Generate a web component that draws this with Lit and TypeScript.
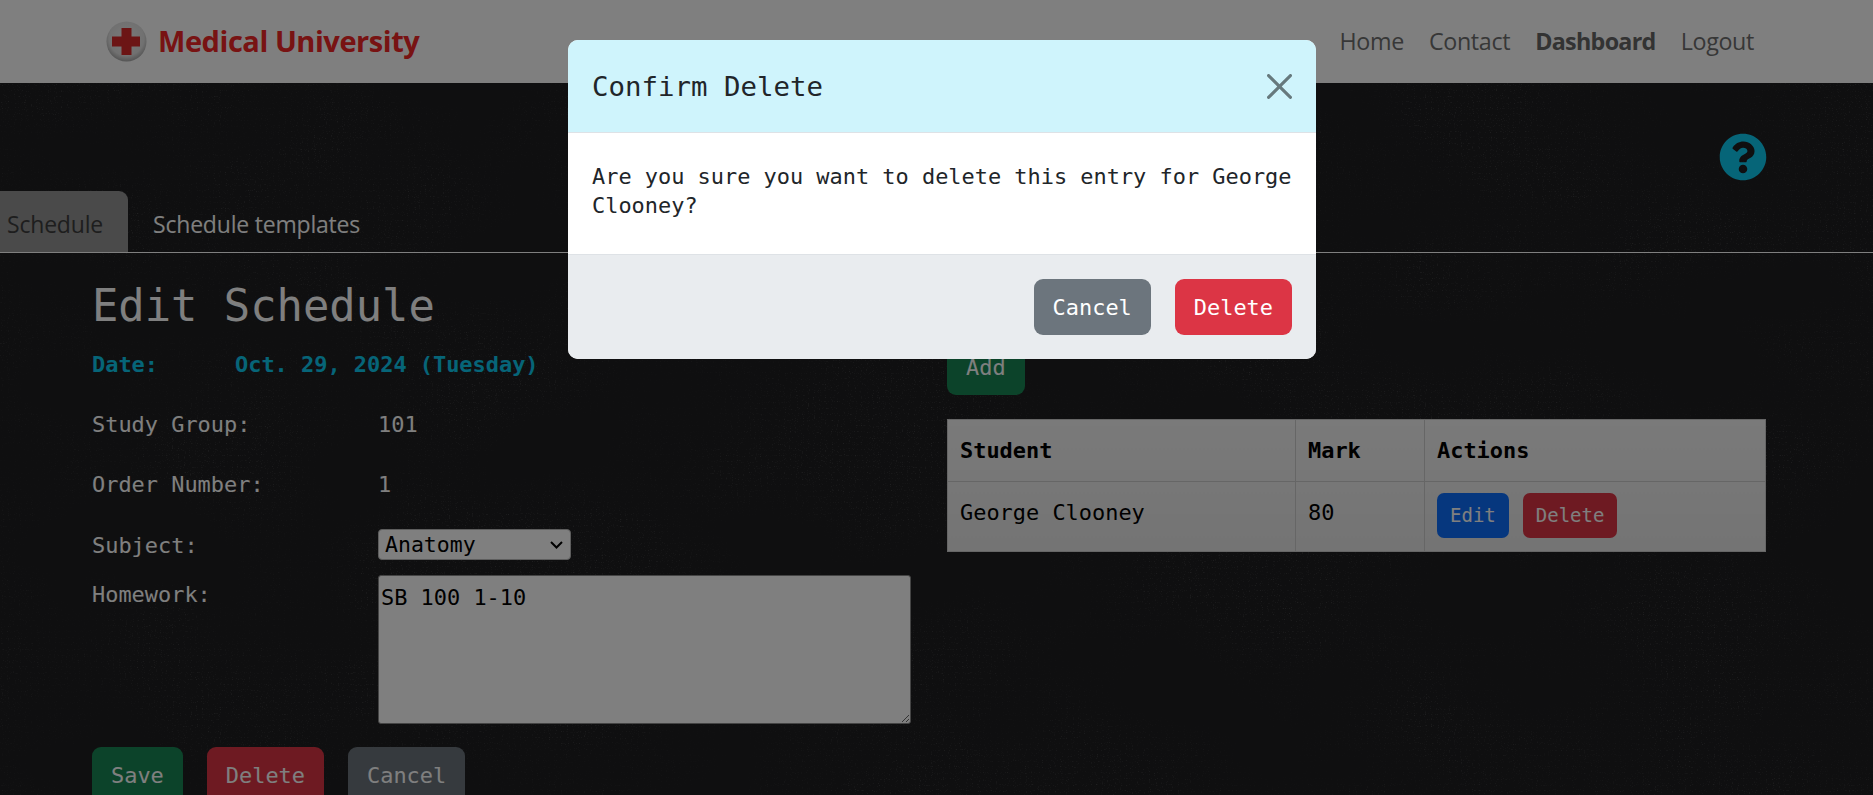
import { LitElement, html, css, svg } from "lit";
import { customElement } from "lit/decorators.js";

const mono = css`"DejaVu Sans Mono", "Liberation Mono", monospace`;
const sans = css`"Open Sans", "Noto Sans", sans-serif`;

@customElement("app-root")
export class AppRoot extends LitElement {
  static styles = css`
    :host { display: block; position: relative; height: 795px; overflow: hidden; background: #1f1f21; font-family: ${mono}; font-size: 21.93px; color: #fff; }
    * { box-sizing: border-box; }
    .texture { position: absolute; inset: 0; width: 100%; height: 100%; }
    .page { position: relative; display: flex; flex-direction: column; height: 795px; }
    nav { flex: none; height: 83px; background: #fff; display: flex; align-items: center; padding: 0 119px 0 106px; font-family: ${sans}; }
    .logo { width: 41px; height: 41px; flex: none; }
    .brand { margin-left: 11px; padding-bottom: 2px; font-size: 29px; font-weight: 700; color: #f02626; letter-spacing: -0.45px; }
    .links { margin-left: auto; padding-bottom: 2px; display: flex; gap: 25px; font-size: 23.3px; color: #6f6f6f; letter-spacing: -0.35px; }
    .links b { color: #666; font-weight: 700; letter-spacing: -0.7px; }
    .help { height: 108px; display: flex; justify-content: flex-end; padding: 50px 106px 0 0; flex: none; }
    .help svg { width: 48px; height: 48px; fill: #0dcaf0; }
    .tabs { flex: none; height: 62px; display: flex; align-items: stretch; border-bottom: 1px solid #fff; font-family: ${sans}; font-size: 23px; letter-spacing: -0.2px; }
    .tab { display: flex; align-items: center; padding: 5px 25px 0 7px; white-space: nowrap; }
    .tab.on { width: 128px; background: #949494; border-radius: 0 9px 0 0; color: #3c3c3c; }
    .tab.off { color: #fff; padding-left: 25px; }
    main { display: grid; grid-template-columns: 819px 819px; column-gap: 36px; padding-left: 92px; }
    h2 { margin: 27px 0 18px; font-size: 43.8px; font-weight: 400; line-height: 52px; }
    .row { display: grid; grid-template-columns: 286px 1fr; line-height: 29px; margin-bottom: 31px; }
    .row.tight { margin-bottom: 30px; }
    .date { color: #0dcaf0; font-weight: 700; grid-template-columns: 143px 1fr; }
    .row.sel { margin-bottom: 16px; align-items: center; height: 30px; }
    .row.sel > span { padding-top: 1px; }
    .selwrap { position: relative; width: 193px; height: 31px; }
    select { appearance: none; display: block; width: 193px; height: 31px; font: inherit; font-size: 21.5px; color: #000; background: #fff; border: 1px solid #bbb; border-radius: 4px; padding: 0 6px; }
    .chev { position: absolute; right: 8px; top: 12px; width: 13px; height: 8px; fill: none; stroke: #000; stroke-width: 2; pointer-events: none; }
    .row.hw { margin-bottom: 23px; align-items: start; }
    .hw span { padding-top: 5px; }
    textarea { display: block; width: 533px; height: 149px; font: inherit; color: #000; background: #fff; border: 1px solid #888; border-radius: 3px; padding: 7px 2px; resize: both; }
    .btns { display: flex; gap: 24px; }
    .btn { display: flex; align-items: center; justify-content: center; height: 56px; padding: 0 19px; border-radius: 9px; color: #fff; }
    .green { background: #198754; } .red { background: #dc3545; } .gray { background: #6c757d; } .blue { background: #0d6efd; }
    .right { padding-top: 86px; }
    .add { display: inline-flex; margin-bottom: 24px; }
    table { width: 819px; border-collapse: collapse; table-layout: fixed; background: linear-gradient(#f4f4f4, #e8e8e8); color: #000; border: 1px solid #ccc; }
    th, td { border: 1px solid #ccc; padding: 0 12px; text-align: left; line-height: 29px; }
    th { height: 62px; font-weight: 700; }
    td { height: 70px; vertical-align: top; padding-top: 16px; }
    td.act { padding-top: 11px; }
    .small { display: flex; gap: 14px; }
    .small .btn { height: 45px; font-size: 19px; padding: 0 13px; border-radius: 7px; }
    .backdrop { position: absolute; inset: 0; background: rgba(0, 0, 0, 0.5); display: flex; justify-content: center; padding: 40px 0 0 11px; align-items: flex-start; }
    .modal { width: 748px; height: 319px; border-radius: 10px; overflow: hidden; background: #fff; color: #212529; display: flex; flex-direction: column; }
    .mh { height: 93px; flex: none; background: #cff4fc; border-bottom: 1px solid #dee2e6; display: flex; align-items: center; justify-content: space-between; padding: 0 24px; }
    .mh span { font-size: 27.4px; }
    .mh svg { width: 25px; height: 25px; fill: #000; opacity: 0.5; }
    .mb { height: 121px; flex: none; padding: 29px 20px 0 24px; line-height: 29px; }
    .mf { flex: 1; background: #e9ecef; border-top: 1px solid #dee2e6; display: flex; justify-content: flex-end; gap: 24px; padding: 24px 24px 0; }
  `;

  render() {
    return html`
      <svg class="texture" aria-hidden="true">
        <filter id="chalk" x="0" y="0" width="100%" height="100%" color-interpolation-filters="sRGB">
          <feTurbulence type="fractalNoise" baseFrequency="0.83" numOctaves="1" seed="23" result="fine" />
          <feColorMatrix in="fine" type="matrix" values="0 0 0 0 1  0 0 0 0 1  0 0 0 0 1  5 0 0 0 -3.1" result="specks" />
          <feTurbulence type="fractalNoise" baseFrequency="0.005 0.008" numOctaves="3" seed="4" result="cloud" />
          <feColorMatrix in="cloud" type="matrix" values="0 0 0 0 1  0 0 0 0 1  0 0 0 0 1  3.2 0 0 0 -1.05" result="mask" />
          <feComposite in="specks" in2="mask" operator="in" />
        </filter>
        <rect width="100%" height="100%" filter="url(#chalk)" opacity="0.14" />
      </svg>
      <div class="page">
        <nav>
          <svg class="logo" viewBox="0 0 41 41">
            <defs>
              <radialGradient id="disc" cx="50%" cy="42%" r="58%">
                <stop offset="0" stop-color="#f4f4f4" />
                <stop offset="0.75" stop-color="#e2e2e2" />
                <stop offset="1" stop-color="#a9a9a9" />
              </radialGradient>
            </defs>
            <circle cx="20.5" cy="20.5" r="20" fill="url(#disc)" />
            <path d="M15.5 7h10v8.5H34v10h-8.5V34h-10v-8.5H6v-10h9.5z" fill="#d92a2a" />
          </svg>
          <span class="brand">Medical University</span>
          <div class="links"><span>Home</span><span>Contact</span><b>Dashboard</b><span>Logout</span></div>
        </nav>
        <div class="help">
          <svg viewBox="0 0 512 512">
            ${svg`<path d="M504 256c0 136.997-111.043 248-248 248S8 392.997 8 256C8 119.083 119.043 8 256 8s248 111.083 248 248zM262.655 90c-54.497 0-89.255 22.957-116.549 63.758-3.536 5.286-2.353 12.415 2.715 16.258l34.699 26.31c5.205 3.947 12.621 3.008 16.665-2.122 17.864-22.658 30.113-35.797 57.303-35.797 20.429 0 45.698 13.148 45.698 32.958 0 14.976-12.363 22.667-32.534 33.976C247.128 238.528 216 254.941 216 296v4c0 6.627 5.373 12 12 12h56c6.627 0 12-5.373 12-12v-1.333c0-28.462 83.186-29.647 83.186-106.667 0-58.002-60.165-102-116.531-102zM256 338c-25.365 0-46 20.635-46 46 0 25.364 20.635 46 46 46s46-20.636 46-46c0-25.365-20.635-46-46-46z" />`}
          </svg>
        </div>
        <div class="tabs">
          <div class="tab on">Schedule</div>
          <div class="tab off">Schedule templates</div>
        </div>
        <main>
          <section>
            <h2>Edit Schedule</h2>
            <div class="row date"><span>Date:</span><span>Oct. 29, 2024 (Tuesday)</span></div>
            <div class="row"><span>Study Group:</span><span>101</span></div>
            <div class="row tight"><span>Order Number:</span><span>1</span></div>
            <div class="row sel">
              <span>Subject:</span>
              <div class="selwrap">
                <select><option>Anatomy</option></select>
                <svg class="chev" viewBox="0 0 13 8"><path d="M1 1l5.5 5.5L12 1" /></svg>
              </div>
            </div>
            <div class="row hw"><span>Homework:</span><textarea>SB 100 1-10</textarea></div>
            <div class="btns">
              <div class="btn green">Save</div>
              <div class="btn red">Delete</div>
              <div class="btn gray">Cancel</div>
            </div>
          </section>
          <section class="right">
            <div class="btn green add">Add</div>
            <table>
              <colgroup><col style="width:348px" /><col style="width:129px" /><col /></colgroup>
              <thead><tr><th>Student</th><th>Mark</th><th>Actions</th></tr></thead>
              <tbody>
                <tr>
                  <td>George Clooney</td>
                  <td>80</td>
                  <td class="act"><div class="small"><div class="btn blue">Edit</div><div class="btn red">Delete</div></div></td>
                </tr>
              </tbody>
            </table>
          </section>
        </main>
      </div>
      <div class="backdrop">
        <div class="modal">
          <div class="mh">
            <span>Confirm Delete</span>
            <svg viewBox="0 0 16 16"><path d="M.293.293a1 1 0 011.414 0L8 6.586 14.293.293a1 1 0 111.414 1.414L9.414 8l6.293 6.293a1 1 0 01-1.414 1.414L8 9.414l-6.293 6.293a1 1 0 01-1.414-1.414L6.586 8 .293 1.707a1 1 0 010-1.414z" /></svg>
          </div>
          <div class="mb">Are you sure you want to delete this entry for George Clooney?</div>
          <div class="mf">
            <div class="btn gray">Cancel</div>
            <div class="btn red">Delete</div>
          </div>
        </div>
      </div>
    `;
  }
}
